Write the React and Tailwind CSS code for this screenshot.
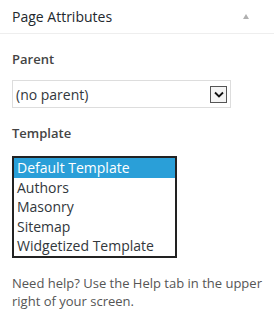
const templates = ['Default Template', 'Authors', 'Masonry', 'Sitemap', 'Widgetized Template'];

const App = () => {
  return (
    <div className="w-[274px] h-[324px] bg-white font-['Open_Sans',sans-serif] overflow-hidden">
      {/* Header */}
      <div className="h-[34px] px-3 flex items-center justify-between border-b border-[#eeeeee]">
        <h2 className="text-[14px] leading-[19px] text-[#23282d] pb-[1px]">Page Attributes</h2>
        <span className="mr-[13px] mb-[1px] w-0 h-0 border-l-[3px] border-r-[3px] border-b-[5px] border-l-transparent border-r-transparent border-b-[#b0b0b0]" />
      </div>

      <div className="px-3">
        <p className="mt-[16px] h-[18px] text-[13px] leading-[18px] font-semibold text-[#444]">Parent</p>

        <div className="mt-[12px] w-[219px] h-[28px] border border-[#dddddd] flex items-center justify-between pl-[3px] pr-[3px]">
          <span className="text-[14px] text-[#32373c] leading-[19px]">(no parent)</span>
          <span className="w-[17px] h-[17px] border border-[#555] bg-[#f4f4f4] flex items-center justify-center">
            <svg width="10" height="7" viewBox="0 0 10 7">
              <path d="M1 1.5 L5 5.5 L9 1.5" fill="none" stroke="#111" strokeWidth="1.8" />
            </svg>
          </span>
        </div>

        <p className="mt-[16px] h-[18px] text-[13px] leading-[18px] font-semibold text-[#444]">Template</p>

        <div className="mt-[14px] w-[165px] border-2 border-[#222]">
          {templates.map((t, i) => (
            <div
              key={t}
              className={`h-[19.6px] px-[3px] text-[14px] leading-[19px] whitespace-nowrap ${
                i === 0 ? 'bg-[#2a9fd8] text-white' : 'text-[#32373c]'
              }`}
            >
              {t}
            </div>
          ))}
        </div>

        <p className="mt-[16px] text-[13px] leading-[18px] text-[#555]">
          Need help? Use the Help tab in the upper right of your screen.
        </p>
      </div>
    </div>
  );
};

export default App;
